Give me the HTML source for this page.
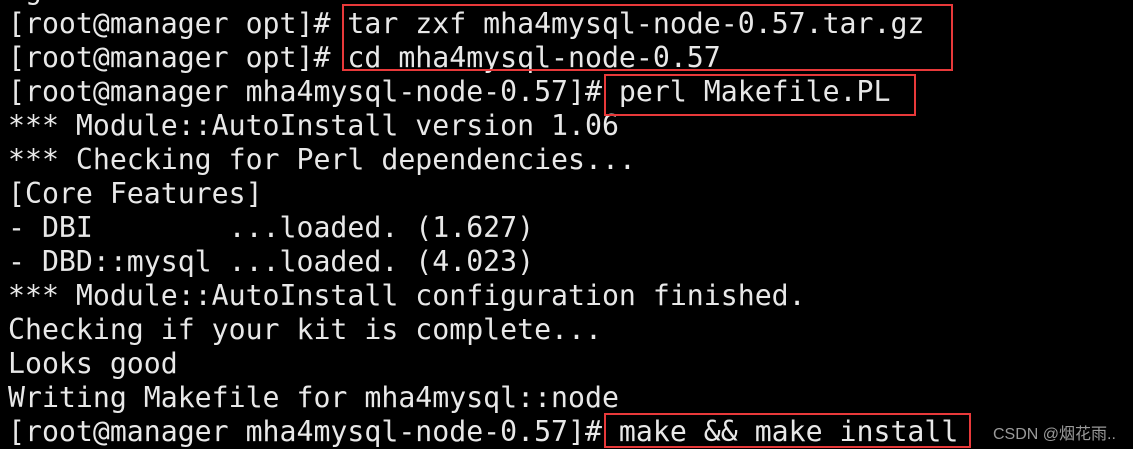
<!DOCTYPE html>
<html><head><meta charset="utf-8"><style>
body{margin:0;width:1133px;height:449px;background:#000;overflow:hidden;position:relative}
pre{margin:0;position:absolute;left:8px;top:-27px;font-family:"DejaVu Sans Mono","Liberation Mono",monospace;font-size:28.2px;line-height:34px;color:#e8e8e8}
.b{position:absolute;border:2px solid #e8393a;box-sizing:border-box}
.w{position:absolute;left:993px;top:420px;font-family:"Liberation Sans","Noto Sans CJK SC",sans-serif;font-size:16px;color:#9a9a9a}
</style></head><body>
<pre> g
[root@manager opt]# tar zxf mha4mysql-node-0.57.tar.gz
[root@manager opt]# cd mha4mysql-node-0.57
[root@manager mha4mysql-node-0.57]# perl Makefile.PL
*** Module::AutoInstall version 1.06
*** Checking for Perl dependencies...
[Core Features]
- DBI        ...loaded. (1.627)
- DBD::mysql ...loaded. (4.023)
*** Module::AutoInstall configuration finished.
Checking if your kit is complete...
Looks good
Writing Makefile for mha4mysql::node
[root@manager mha4mysql-node-0.57]# make &amp;&amp; make install</pre>
<div class="b" style="left:342px;top:4px;width:611px;height:67px"></div>
<div class="b" style="left:604px;top:74px;width:312px;height:42px"></div>
<div class="b" style="left:604px;top:413px;width:367px;height:35px"></div>
<div class="w">CSDN @烟花雨..</div>
</body></html>
